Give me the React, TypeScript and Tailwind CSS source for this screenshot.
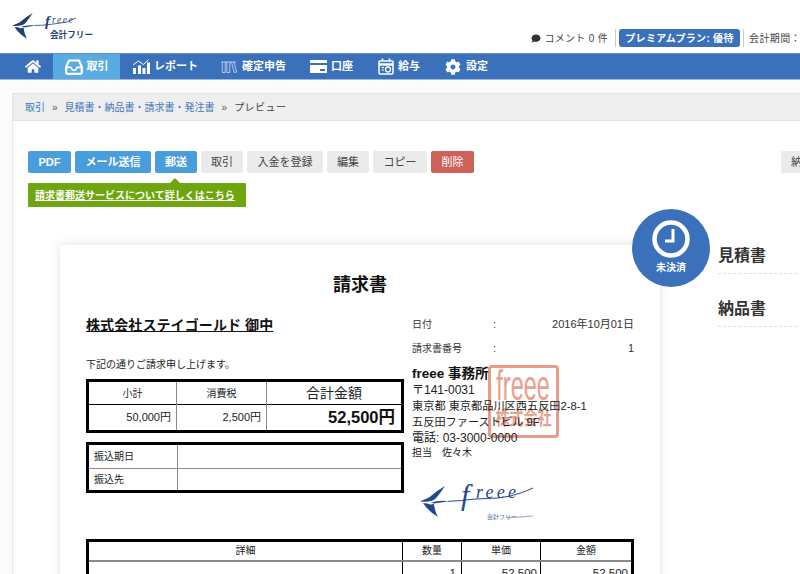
import { FaCog, FaComment, FaHome } from 'react-icons/fa';

const navy = '#1f3f78';

function Swallow({ color = navy }: { color?: string }) {
  return (
    <g fill={color}>
      <path d="M0 15.5 L9 11.5 Q16 5 25 0 Q21 6 17 11 Q14 15 8 15.5 Q4 16 0 15.5 Z" />
      <path d="M3 17 Q7 17 10.5 18.5 L14 18 Q15 26 18 31 Q9 26 3 17 Z" />
      <path d="M11 16.7 Q18 14 29 15.2 L14 17.6 Z" />
    </g>
  );
}

function TopLogo() {
  return (
    <svg viewBox="0 0 84 30" className="w-[84px] h-[30px] overflow-visible" aria-label="freee">
      <g transform="translate(0 1) scale(0.83)">
        <Swallow />
      </g>
      <path d="M23 13.5 Q30 13.5 37 12.5 L45 11.5 Q54 11.5 64 6" stroke={navy} strokeWidth="0.8" fill="none" />
      <text x="33" y="14" fontFamily="'Liberation Serif', serif" fontStyle="italic" fontWeight="700" fontSize="15" fill={navy}>
        f
      </text>
      <text x="40" y="10.5" fontFamily="'Liberation Serif', serif" fontStyle="italic" fontSize="9.5" letterSpacing="1.6" fill={navy}>
        reee
      </text>
      <text x="38" y="26" fontFamily="'Noto Sans CJK JP', sans-serif" fontWeight="700" fontSize="8.6" fill={navy}>
        会計フリー
      </text>
    </svg>
  );
}

function InvoiceLogo() {
  return (
    <svg viewBox="0 0 114 38" className="w-[114px] h-[38px] overflow-visible" aria-label="freee">
      <g transform="translate(0 2)">
        <Swallow color="#23498d" />
      </g>
      <path d="M28 17.3 Q40 17 53 15.2 L66 14.5 Q90 15 113 4" stroke="#23498d" strokeWidth="1" fill="none" />
      <text x="41" y="21" fontFamily="'Liberation Serif', serif" fontStyle="italic" fontSize="30" fill="#23498d">
        f
      </text>
      <text x="56" y="14" fontFamily="'Liberation Serif', serif" fontStyle="italic" fontSize="18" letterSpacing="3.2" fill="#23498d">
        reee
      </text>
      <text x="67" y="35" fontFamily="'Noto Sans CJK JP', sans-serif" fontSize="6" fill="#4a6aa5">
        会計フリー
      </text>
      <path d="M86 33.5 Q100 33.5 113 32" stroke="#4a6aa5" strokeWidth="0.6" fill="none" />
    </svg>
  );
}

function NavIcon({ name }: { name: string }) {
  if (name === 'home') return <FaHome className="w-[16px] h-[15px]" />;
  if (name === 'deals')
    return (
      <svg viewBox="0 0 18 16" className="w-[18px] h-[16px]" fill="none" stroke="currentColor" strokeWidth="2.2">
        <path d="M4 1.5 H14 L16.8 8 V13 Q16.8 14.8 15 14.8 H3 Q1.2 14.8 1.2 13 V8 Z" />
        <path d="M1.5 8.4 H6 Q7 11.4 9 11.4 Q11 11.4 12 8.4 H16.5" strokeWidth="1.6" />
      </svg>
    );
  if (name === 'report')
    return (
      <svg viewBox="0 0 18 15" className="w-[18px] h-[15px]" fill="currentColor">
        <path d="M1 9 h3 v6 h-3 z M6 6.5 h3 v8.5 h-3 z M10.5 9 h3 v6 h-3 z M15 3.5 h3 v11.5 h-3 z" />
        <path d="M1 6 L6.5 2 L11.5 5.5 L16.5 0.8" stroke="currentColor" strokeWidth="1" fill="none" />
      </svg>
    );
  if (name === 'tax')
    return (
      <svg viewBox="0 0 19 14" className="w-[16px] h-[14px]" fill="none" stroke="currentColor" strokeWidth="1" opacity="0.75">
        <path d="M0.5 1 H18 M1.5 1 V13.5 H5 V1 M7 1 V13.5 H10.5 V1 M12.5 1 L15.5 13.5 L18.5 13 L15.5 1" />
      </svg>
    );
  if (name === 'bank')
    return (
      <svg viewBox="0 0 17 13" className="w-[17px] h-[13px]" fill="currentColor">
        <path d="M0 0 H17 V3 H0 Z" />
        <path d="M0 5 H17 V13 H0 Z M10 9 V11 H15 V9 Z" fillRule="evenodd" />
      </svg>
    );
  if (name === 'payroll')
    return (
      <svg viewBox="0 0 16 17" className="w-[16px] h-[17px]" fill="none" stroke="currentColor">
        <rect x="1" y="3" width="14" height="13" rx="1" strokeWidth="1.5" />
        <path d="M1 6.5 H15" strokeWidth="2.5" />
        <path d="M4.5 0.5 V3 M11.5 0.5 V3" strokeWidth="1.6" />
        <circle cx="10" cy="11.5" r="2.5" strokeWidth="1.3" />
        <path d="M3.5 9.5 H6 M3.5 12 H6" strokeWidth="1.2" />
      </svg>
    );
  return <FaCog className="w-[16px] h-[16px]" />;
}

const navItems = [
  { icon: 'report', label: 'レポート', cls: 'w-[89px] gap-[4px]' },
  { icon: 'tax', label: '確定申告', cls: 'w-[89px] gap-[5px]' },
  { icon: 'bank', label: '口座', cls: 'w-[68px] gap-[4px]' },
  { icon: 'payroll', label: '給与', cls: 'w-[67px] gap-[4px]' },
  { icon: 'settings', label: '設定', cls: 'gap-[5px]' },
];

const actions = [
  { label: 'PDF', cls: 'w-[43px] bg-[#4a9ddb] text-white font-bold' },
  { label: 'メール送信', cls: 'w-[76px] bg-[#4a9ddb] text-white font-bold' },
  { label: '郵送', cls: 'w-[42px] bg-[#4a9ddb] text-white font-bold' },
  { label: '取引', cls: 'w-[42px] bg-[#ebebeb] text-[#444]' },
  { label: '入金を登録', cls: 'w-[76px] bg-[#ebebeb] text-[#444]' },
  { label: '編集', cls: 'w-[42px] bg-[#ebebeb] text-[#444]' },
  { label: 'コピー', cls: 'w-[54px] bg-[#ebebeb] text-[#444]' },
  { label: '削除', cls: 'w-[43px] bg-[#cd625a] text-white' },
];

function Stamp() {
  return (
    <div className="absolute left-[428px] top-[120px] w-[71px] h-[73px] border-[3px] border-[#e59b87] rounded-[4px] flex flex-col items-center text-[#e8a08c]">
      <span className="h-[36px] text-[36px] leading-[36px] scale-x-[0.65] scale-y-[1.2] font-['Liberation_Sans',sans-serif] whitespace-nowrap">freee</span>
      <span className="mt-[5px] text-[14px] leading-[18px] font-bold scale-y-[1.4] whitespace-nowrap">株式会社</span>
    </div>
  );
}

export default function App() {
  return (
    <div className="w-[800px] h-[574px] overflow-hidden bg-white text-[#333] font-['Liberation_Sans','Noto_Sans_CJK_JP',sans-serif]">
      <header className="h-[53px] flex">
        <div className="pl-[12px] pt-[12px]">
          <TopLogo />
        </div>
        <div className="ml-auto pt-[29px] flex items-center h-[47px] text-[10px] whitespace-nowrap text-[#444]">
          <FaComment className="w-[10px] h-[9px] text-[#333] mr-[3px]" />
          <span className="tracking-[0.3px]">コメント 0 件</span>
          <div className="w-px h-[18px] bg-[#ccc] ml-[7px] mr-[3px]" />
          <div className="w-[121px] h-[18px] rounded-[3px] bg-[#3b71bb] text-white font-bold flex items-center justify-center tracking-[0.3px]">
            プレミアムプラン: 優待
          </div>
          <div className="w-px h-[18px] bg-[#ccc] ml-[3px] mr-[5px]" />
          <span className="w-[51px] tracking-[0.4px]">会計期間：</span>
        </div>
      </header>

      <nav className="h-[27px] bg-[#3b71bb] border-t border-[#5f8ed0] border-b-[#9bb9e0] border-b flex items-stretch pl-[25px] text-white text-[11px] font-bold">
        <div className="flex items-center w-[28px]">
          <NavIcon name="home" />
        </div>
        <div className="w-[67px] mr-[12px] flex items-center justify-center gap-[4px] bg-[#58ace2]">
          <NavIcon name="deals" />
          <span>取引</span>
        </div>
        {navItems.map(item => (
          <div key={item.label} className={`flex items-center ${item.cls}`}>
            <NavIcon name={item.icon} />
            <span>{item.label}</span>
          </div>
        ))}
      </nav>

      <main className="bg-[#fafbfb] pt-[13px] pl-[12px]">
        <div className="h-[28px] bg-[#eeeeee] border-y border-l border-[#e3e3e3] flex items-center pl-[12px] gap-[7px] text-[10px]">
          <span className="text-[#3f79b8]">取引</span>
          <span className="text-[#555]">»</span>
          <span className="text-[#3f79b8]">見積書・納品書・請求書・発注書</span>
          <span className="text-[#555]">»</span>
          <span className="text-[#444] tracking-[0.5px]">プレビュー</span>
        </div>

        <div className="bg-white border-l border-[#e8e8e8] h-[453px] pt-[30px] pl-[15px] overflow-hidden">
          <div className="flex">
            <div className="flex gap-[4px]">
              {actions.map(a => (
                <div key={a.label} className={`h-[22px] rounded-[2px] flex items-center justify-center text-[11px] ${a.cls}`}>
                  {a.label}
                </div>
              ))}
            </div>
            <div className="ml-[307px] w-[40px] shrink-0 h-[22px] bg-[#ebebeb] rounded-[2px] text-[11px] text-[#444] flex items-center pl-[10px]">納</div>
          </div>

          <div className="relative mt-[10px] w-[218px] h-[24px] bg-[#6fa60f] rounded-[1px] flex items-center pl-[7px] text-[10px] font-bold text-white underline whitespace-nowrap">
            <div className="absolute left-[142px] -top-[5px] w-0 h-0 border-x-[5px] border-x-transparent border-b-[5px] border-b-[#6fa60f]" />
            請求書郵送サービスについて詳しくはこちら
          </div>

          <div className="flex mt-[38px]">
            <div className="relative ml-[32px] w-[600px] h-[340px] shrink-0 bg-white shadow-[0_0_10px_rgba(0,0,0,0.13)] pt-[28px] pl-[26px] pr-[26px] text-[10px] text-[#222]">
              <h1 className="text-center text-[18px] leading-[24px] font-bold text-[#111]">請求書</h1>

              <div className="flex mt-[16px]">
                <div className="w-[318px] shrink-0">
                  <p className="mt-[2px] text-[14px] leading-[20px] font-bold text-[#111] underline tracking-[0.1px]">株式会社ステイゴールド 御中</p>
                  <p className="mt-[23px] text-[10px] leading-[14px]">下記の通りご請求申し上げます。</p>

                  <table className="mt-[7px] w-[318px] h-[52px] table-fixed border-collapse border-[3px] border-black">
                    <tbody>
                      <tr className="h-[24px] border-b border-black">
                        <td className="w-[89px] border-r border-[#888] text-center text-[10px]">小計</td>
                        <td className="w-[90px] border-r border-[#888] text-center text-[10px]">消費税</td>
                        <td className="text-center text-[14px]">合計金額</td>
                      </tr>
                      <tr>
                        <td className="border-r border-[#888] text-right pr-[5px] text-[11px]">50,000円</td>
                        <td className="border-r border-[#888] text-right pr-[5px] text-[11px]">2,500円</td>
                        <td className="text-right pr-[6px] text-[16.5px] font-bold text-[#111]">52,500円</td>
                      </tr>
                    </tbody>
                  </table>

                  <table className="mt-[9px] w-[318px] h-[51px] table-fixed border-collapse border-[3px] border-black">
                    <tbody>
                      <tr className="h-[25px] border-b border-[#888]">
                        <td className="w-[90px] border-r border-[#888] pl-[5px]">振込期日</td>
                        <td />
                      </tr>
                      <tr>
                        <td className="border-r border-[#888] pl-[5px]">振込先</td>
                        <td />
                      </tr>
                    </tbody>
                  </table>
                </div>

                <div className="ml-[8px] w-[222px] shrink-0 relative">
                  <div className="flex h-[24px] items-center text-[11px] text-[#333] -mt-[1px]">
                    <span className="w-[81px] text-[10px]">日付</span>
                    <span>:</span>
                    <span className="ml-auto">2016年10月01日</span>
                  </div>
                  <div className="flex h-[24px] items-center text-[11px] text-[#333]">
                    <span className="w-[81px] text-[10px]">請求書番号</span>
                    <span>:</span>
                    <span className="ml-auto">1</span>
                  </div>
                  <div className="mt-[5px] relative z-10 text-[11.2px] leading-[16px]">
                    <p className="text-[13.5px] leading-[17px] font-bold text-[#111]">freee 事務所</p>
                    <p className="text-[12px]">〒141-0031</p>
                    <p>東京都 東京都品川区西五反田2-8-1</p>
                    <p>五反田ファーストビル 9F</p>
                    <p className="text-[12px]">電話: 03-3000-0000</p>
                    <p className="text-[10px] leading-[14px]">担当　佐々木</p>
                  </div>
                  <div className="mt-[24px] ml-[8px]">
                    <InvoiceLogo />
                  </div>
                </div>
              </div>

              <Stamp />

              <table className="mt-[17px] w-[548px] table-fixed border-collapse border-[3px] border-black">
                <tbody>
                  <tr className="h-[20px] border-b-2 border-[#888] text-center">
                    <td className="w-[315px] border-r border-black">詳細</td>
                    <td className="w-[59px] border-r border-black">数量</td>
                    <td className="w-[79px] border-r border-black">単価</td>
                    <td>金額</td>
                  </tr>
                  <tr className="h-[30px] text-right text-[11.5px]">
                    <td className="border-r border-black" />
                    <td className="border-r border-black pr-[5px] align-top pt-[3px]">1</td>
                    <td className="border-r border-black pr-[3px] align-top pt-[3px]">52,500</td>
                    <td className="pr-[3px] align-top pt-[3px]">52,500</td>
                  </tr>
                </tbody>
              </table>

              <div className="absolute -right-[50px] -top-[36px] w-[78px] h-[78px] rounded-full bg-[#3b71bb] flex flex-col items-center pt-[11px] text-white">
                <svg viewBox="0 0 38 38" className="w-[38px] h-[38px]" fill="none" stroke="currentColor">
                  <circle cx="19" cy="19" r="16.5" strokeWidth="4.5" />
                  <path d="M21 9 V21 H13" strokeWidth="3" />
                </svg>
                <span className="mt-[3px] text-[10px] font-bold leading-[14px]">未決済</span>
              </div>
            </div>

            <aside className="ml-[58px] w-[120px] shrink-0 -mt-[6px]">
              <div className="h-[35px] border-b border-dashed border-[#ddd] text-[16px] font-bold text-[#333] leading-[33px]">見積書</div>
              <div className="mt-[18px] h-[35px] border-b border-dashed border-[#ddd] text-[16px] font-bold text-[#333] leading-[33px]">納品書</div>
            </aside>
          </div>
        </div>
      </main>
    </div>
  );
}
